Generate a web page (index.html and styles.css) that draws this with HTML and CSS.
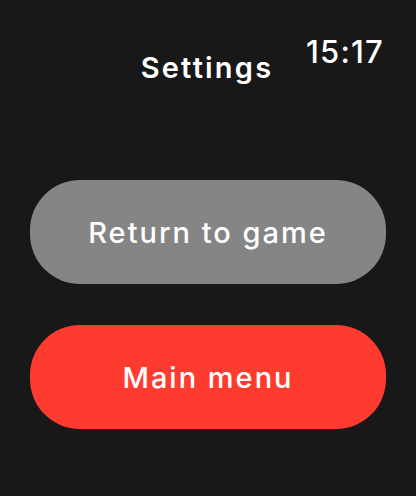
FILE: index.html
```html
<!DOCTYPE html>
<html lang="en">
<head>
    <meta charset="UTF-8">
    <meta name="viewport" content="width=device-width, initial-scale=1.0">
    <title>Settings</title>
    <link rel="stylesheet" href="styles.css">
</head>
<body>
    <header class="topbar">
        <span class="topbar-spacer"></span>
        <h1 class="title">Settings</h1>
        <span class="clock">15:17</span>
    </header>

    <main class="actions">
        <button class="pill pill-grey">Return to game</button>
        <button class="pill pill-red">Main menu</button>
    </main>
</body>
</html>
```

FILE: styles.css
```css
body, h1 {
    margin: 0;
    padding: 0;
}

body {
    background-color: #181818;
    color: white;
    font-family: 'Inter', 'Noto Sans', sans-serif;
    width: 416px;
    height: 496px;
    overflow: hidden;
}

.topbar {
    display: grid;
    grid-template-columns: 1fr auto 1fr;
    align-items: start;
    padding: 0 32px 0 30px;
}

.title {
    font-size: 29px;
    font-weight: 600;
    letter-spacing: 2.2px;
    padding-top: 51px;
    line-height: 34px;
}

.clock {
    justify-self: end;
    font-size: 31px;
    font-weight: 500;
    letter-spacing: 1.2px;
    padding-top: 34px;
    line-height: 36px;
}

.actions {
    display: flex;
    flex-direction: column;
    gap: 41px;
    padding: 95px 30px 0 30px;
}

.pill {
    height: 104px;
    border: none;
    border-radius: 50px;
    color: white;
    font-family: 'Inter', 'Noto Sans', sans-serif;
    font-size: 29px;
    font-weight: 500;
    letter-spacing: 2px;
    cursor: pointer;
}

.pill-grey {
    background-color: #858585;
}

.pill-red {
    background-color: #ff3b30;
}
```
